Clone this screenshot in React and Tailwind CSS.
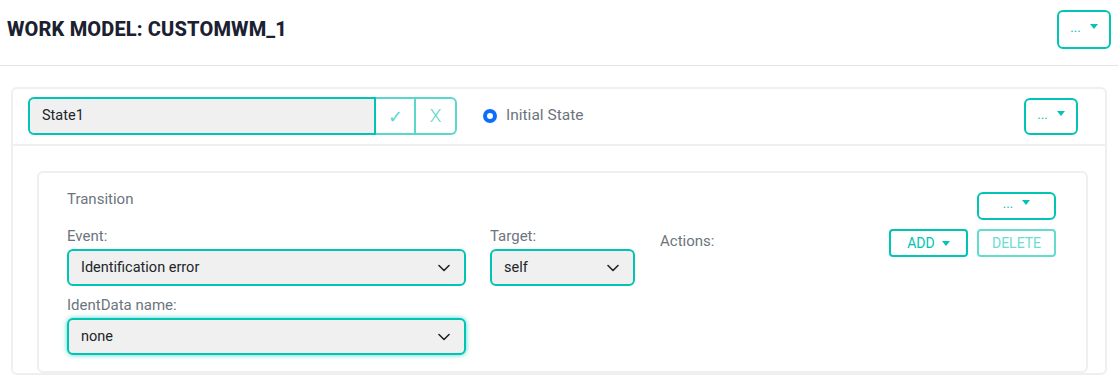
import React from 'react';

const teal = 'border-[#00c4b4]';

function Caret() {
  return (
    <span className="inline-block w-0 h-0 border-t-[5px] border-t-[#00c4b4] border-x-[4px] border-x-transparent ml-[9px] mb-[6px]"></span>
  );
}

function DotsButton({ className = '' }) {
  return (
    <button className={`flex items-end justify-center border-2 ${teal} rounded-md bg-white text-[#00c4b4] text-[13px] leading-none ${className}`}>
      <span className="mb-[1px]">...</span>
      <Caret />
    </button>
  );
}

function Chevron() {
  return (
    <svg width="12" height="8" viewBox="0 0 12 8" fill="none">
      <path d="M1 1.5 L6 6.5 L11 1.5" stroke="#212529" strokeWidth="1.6" strokeLinecap="round" strokeLinejoin="round" />
    </svg>
  );
}

function Select({ value, width, glow }) {
  return (
    <div
      className={`flex items-center justify-between h-[37px] ${width} pl-[12px] pr-[14px] bg-[#f0f0f0] border-2 ${teal} rounded-md text-[14.5px] text-[#212529] ${glow ? 'shadow-[0_0_5px_rgba(0,196,180,0.7)]' : ''}`}
    >
      <span>{value}</span>
      <Chevron />
    </div>
  );
}

export default function App() {
  return (
    <div className="w-full min-h-screen bg-white font-['Roboto','Noto_Sans',sans-serif]">
      {/* header */}
      <div className="flex items-start justify-between h-[66px] pt-[10px] pl-[7px] pr-[7px] border-b border-[#e3e3e3]">
        <h1 className="text-[20px] font-extrabold leading-[39px] text-[#1b2130] tracking-[0.15px]">WORK MODEL: CUSTOMWM_1</h1>
        <DotsButton className="w-[54px] h-[39px] pb-[12px]" />
      </div>

      <div className="pt-[21px] px-[11px]">
        <div className="border-2 border-[#efefef] rounded-md">
          {/* state header */}
          <div className="flex items-center justify-between pt-[8px] pb-[9px] pl-[15px] pr-[27px] border-b-2 border-[#efefef]">
            <div className="flex items-center">
              <div className="flex h-[38px]">
                <div className={`flex items-center w-[348px] bg-[#f0f0f0] border-2 ${teal} rounded-l-md pl-[12px] text-[14.5px] text-[#212529]`}>
                  State1
                </div>
                <div className="flex items-center justify-center w-[40px] border-2 border-l-0 border-[#5bd8cc] text-[#5bd8cc] text-[18px] font-light">✓</div>
                <div className="flex items-center justify-center w-[41px] border-2 border-l-0 border-[#5bd8cc] rounded-r-md text-[#5bd8cc] text-[19px] font-light">X</div>
              </div>
              <div className="flex items-center ml-[26px]">
                <span className="w-[14px] h-[14px] rounded-full border-[4px] border-[#0d6efd] bg-white"></span>
                <span className="ml-[9px] text-[15.5px] text-[#6c757d]">Initial State</span>
              </div>
            </div>
            <DotsButton className="w-[54px] h-[37px] pb-[11px]" />
          </div>

          {/* body */}
          <div className="pt-[25px] pl-[24px] pr-[17px]">
            <div className="flex justify-between border-2 border-[#efefef] rounded-md pt-[16px] pb-[16px] pl-[28px] pr-[30px]">
              <div className="flex flex-col">
                <div className="text-[15px] leading-[20px] text-[#6c757d]">Transition</div>
                <div className="flex mt-[17px]">
                  <div className="flex flex-col">
                    <div className="text-[15px] leading-[20px] text-[#6c757d] mb-[3px]">Event:</div>
                    <Select value="Identification error" width="w-[399px]" />
                    <div className="text-[15px] leading-[20px] text-[#6c757d] mt-[9px] mb-[3px]">IdentData name:</div>
                    <Select value="none" width="w-[399px]" glow />
                  </div>
                  <div className="flex flex-col ml-[24px]">
                    <div className="text-[15px] leading-[20px] text-[#6c757d] mb-[3px]">Target:</div>
                    <Select value="self" width="w-[145px]" />
                  </div>
                  <div className="ml-[25px] mt-[5px] text-[15px] leading-[20px] text-[#6c757d]">Actions:</div>
                </div>
              </div>
              <div className="flex flex-col items-end mt-[3px]">
                <DotsButton className="w-[79px] h-[28px] pb-[7px]" />
                <div className="flex gap-[9px] mt-[9px]">
                  <button className={`flex items-center justify-center w-[79px] h-[28px] border-2 ${teal} rounded-[4px] text-[#00c4b4] text-[14px]`}>
                    ADD
                    <span className="inline-block w-0 h-0 border-t-[5px] border-t-[#00c4b4] border-x-[4px] border-x-transparent ml-[7px]"></span>
                  </button>
                  <button className="flex items-center justify-center w-[79px] h-[28px] border-2 border-[#63dbcf] rounded-[4px] text-[#6adcd1] text-[14px]">
                    DELETE
                  </button>
                </div>
              </div>
            </div>
          </div>
        </div>
      </div>
    </div>
  );
}
